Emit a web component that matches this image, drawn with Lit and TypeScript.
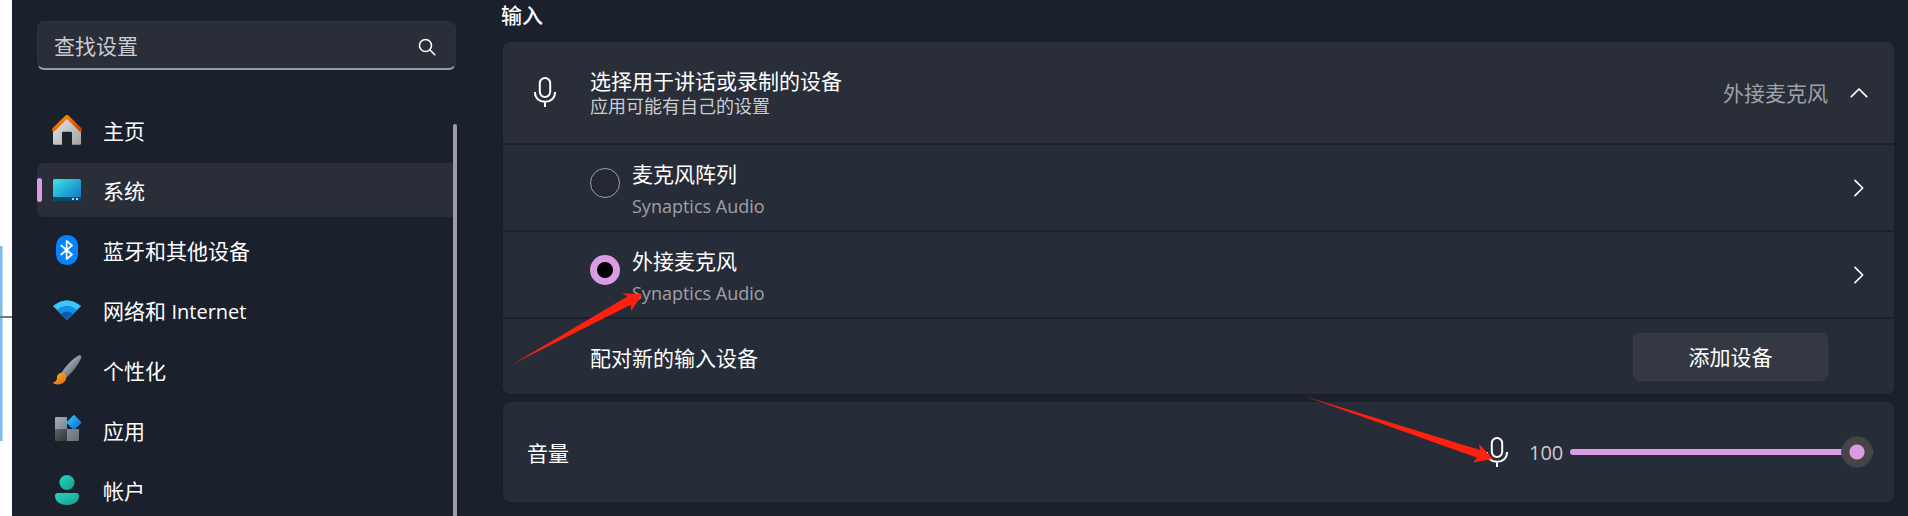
import { LitElement, html, svg, css } from "lit";
import { customElement, state } from "lit/decorators.js";
import { classMap } from "lit/directives/class-map.js";
import { styleMap } from "lit/directives/style-map.js";

const homeIcon = svg`
  <defs>
    <linearGradient id="wall" x1="0" y1="0" x2="1" y2="1"><stop offset="0" stop-color="#e8e8e8"/><stop offset="1" stop-color="#a2a2a2"/></linearGradient>
    <linearGradient id="roof" x1="0" y1="0" x2="1" y2="1"><stop offset="0" stop-color="#fb9a05"/><stop offset="1" stop-color="#d83b01"/></linearGradient>
  </defs>
  <path fill="url(#wall)" d="M1 14 15 2.500 29 14v14.500a1.200 1.200 0 0 1-1.200 1.200H20V18a1.200 1.200 0 0 0-1.200-1.200h-7.600A1.200 1.200 0 0 0 10 18v11.700H2.200A1.200 1.200 0 0 1 1 28.500z"/>
  <path fill="none" stroke="url(#roof)" stroke-width="3.600" stroke-linecap="round" stroke-linejoin="round" d="M1.800 14.500 14 2.500Q15 1.500 16 2.500L28.200 14.500"/>`;

const systemIcon = svg`
  <defs><linearGradient id="scr" x1="0" y1="0" x2="1" y2="1"><stop offset="0" stop-color="#40e4e8"/><stop offset="1" stop-color="#0a6fc4"/></linearGradient></defs>
  <rect x="1" y="4" width="28" height="22" rx="1.500" fill="url(#scr)"/>
  <path fill="#0c4a6c" d="M1 22h28v2.500a1.500 1.500 0 0 1-1.500 1.500h-25A1.500 1.500 0 0 1 1 24.500z"/>
  <path fill="#b9d3e4" d="M20 23h2v2h-2zM24 23h2v2h-2z"/>`;

const bluetoothIcon = svg`
  <rect x="4" y="0" width="22" height="30" rx="10.500" fill="#0682fb"/>
  <path fill="none" stroke="#fff" stroke-width="1.700" stroke-linejoin="round" stroke-linecap="round" d="M9.200 10.500 20 19.500 14.600 24V6L20 10.500 9.200 19.500"/>`;

const networkIcon = svg`
  <path fill="#3bc8f8" stroke="#3bc8f8" stroke-linejoin="round" d="M1.500 11Q15 .500 28.500 11L15 24.500z"/>
  <path fill="#1590e0" d="M5 14.800Q15 6.500 25 14.800L15 25.200z"/>
  <path fill="#0c5cab" d="M9 18.800Q15 14 21 18.800L15 25.200z"/>`;

const brushIcon = svg`
  <defs>
    <linearGradient id="handle" x1="0" y1="0" x2="1" y2="1"><stop offset=".3" stop-color="#b0b5bb"/><stop offset=".75" stop-color="#5d646b"/></linearGradient>
    <linearGradient id="tip" x1="0" y1="0" x2="1" y2="1"><stop offset="0" stop-color="#ffc02e"/><stop offset="1" stop-color="#e8590c"/></linearGradient>
  </defs>
  <path fill="url(#handle)" d="M9 18.500Q17 6 26.500.500q2-.6 2.700.8.4 1-.4 2.600Q24 14 14.500 22.500z"/>
  <path fill="url(#tip)" d="M5 22.500c0-3.500 4-5.500 7-4.300 3 1.400 3.200 5.800.5 8.600C9.500 30 3.500 30.300.5 27.500c2.500 0 4.500-1.500 4.500-5z"/>`;

const appsIcon = svg`
  <defs>
    <linearGradient id="t1" x1="0" y1="0" x2="1" y2="1"><stop offset="0" stop-color="#a5adb6"/><stop offset="1" stop-color="#7d858f"/></linearGradient>
    <linearGradient id="t2" x1="0" y1="0" x2="1" y2="1"><stop offset="0" stop-color="#606669"/><stop offset="1" stop-color="#2f3336"/></linearGradient>
    <linearGradient id="t3" x1="0" y1="0" x2="1" y2="1"><stop offset="0" stop-color="#888e98"/><stop offset="1" stop-color="#686d75"/></linearGradient>
    <linearGradient id="dia" x1="0" y1="0" x2="1" y2="1"><stop offset=".2" stop-color="#2fb8f6"/><stop offset=".9" stop-color="#0b6bd0"/></linearGradient>
  </defs>
  <path fill="url(#t1)" d="M4 2h11v12H3V3a1 1 0 0 1 1-1z"/>
  <path fill="url(#t2)" d="M3 14h12v12H4a1 1 0 0 1-1-1z"/>
  <path fill="url(#t3)" d="M15 14h12v11a1 1 0 0 1-1 1H15z"/>
  <path fill="url(#dia)" d="M21.200.4q.8-.8 1.600 0l6.300 6.300q.8.8 0 1.600l-6.300 6.300q-.8.8-1.600 0l-6.300-6.300q-.8-.8 0-1.600z"/>`;

const accountIcon = svg`
  <defs><linearGradient id="acc" x1="0" y1="0" x2="1" y2="1"><stop offset="0" stop-color="#25d6c0"/><stop offset="1" stop-color="#139c8c"/></linearGradient></defs>
  <circle cx="15" cy="7.500" r="7.600" fill="url(#acc)"/>
  <path fill="url(#acc)" d="M6 18h18a3 3 0 0 1 3 3c0 6-6 9-12 9S3 27 3 21a3 3 0 0 1 3-3z"/>`;

const micIcon = html`<svg class="mic" viewBox="0 0 24 32" width="24" height="32" aria-hidden="true">
  <g fill="none" stroke="#fff" stroke-width="2" stroke-linecap="butt">
    <rect x="6.800" y="2" width="10.400" height="19" rx="5.200"/>
    <path d="M2 16v.5c0 5.500 4.200 9.200 10 9.200s10-3.700 10-9.200V16M12 26v5"/>
  </g>
</svg>`;

const chevron = (d: string) => html`<svg viewBox="0 0 18 18" width="18" height="18" aria-hidden="true">
  <path d=${d} fill="none" stroke="#fff" stroke-width="1.700" stroke-linecap="round" stroke-linejoin="round"/>
</svg>`;
const UP = "M1.300 12.700 9 5l7.700 7.700";
const RIGHT = "M5 1.300 12.700 9 5 16.700";

const navItems = [
  { id: "home", label: "主页", icon: homeIcon },
  { id: "system", label: "系统", icon: systemIcon },
  { id: "bluetooth", label: "蓝牙和其他设备", icon: bluetoothIcon },
  { id: "network", label: html`网络和 <span class="latin">Internet</span>`, icon: networkIcon },
  { id: "personal", label: "个性化", icon: brushIcon },
  { id: "apps", label: "应用", icon: appsIcon },
  { id: "accounts", label: "帐户", icon: accountIcon },
];

const devices = [
  { id: "array", name: "麦克风阵列", vendor: "Synaptics Audio" },
  { id: "external", name: "外接麦克风", vendor: "Synaptics Audio" },
];

const base = css`
  * { box-sizing: border-box; }
  button, input { font: inherit; color: inherit; margin: 0; }
  button { border: 0; background: none; padding: 0; text-align: left; }
  svg { display: block; flex: none; }
  .label { padding-top: 2px; }
`;

@customElement("settings-nav")
class SettingsNav extends LitElement {
  @state() current = "system";

  static styles = [base, css`
    :host { display: flex; flex-direction: column; padding: 21px 0 0 25px; min-height: 0; }
    .search {
      display: flex; align-items: center; height: 49px; margin-right: 1px; padding: 0 19px 0 16px; flex: none;
      background: #292e39; border: 1px solid #2d323d; border-bottom: 2px solid #9a9ca2; border-radius: 7px;
    }
    .field { flex: 1; min-width: 0; border: 0; outline: 0; background: none; padding: 2px 0 0; line-height: 30px; }
    .field::placeholder { color: #cbccd0; opacity: 1; }
    .glass { margin-top: 4px; }
    .body { display: flex; margin-top: 33px; flex: 1; min-height: 0; }
    .list { flex: 1; list-style: none; margin: 0; padding: 0; display: flex; flex-direction: column; gap: 6px; overflow: hidden; }
    .link {
      display: flex; align-items: center; gap: 21px; height: 54px; padding-left: 15px;
      color: #fff; text-decoration: none; border-radius: 7px; position: relative;
    }
    .latin { font-size: 20px; }
    .active { background: #292e39; }
    .active::before { content: ""; position: absolute; left: 0; top: 15px; width: 5px; height: 24px; border-radius: 3px; background: #dc9ce4; }
    .thumb { width: 4px; margin: 21px 0 0 -4px; border-radius: 2px 2px 0 0; background: #9a9ca2; position: relative; }
  `];

  render() {
    return html`
      <label class="search">
        <input class="field" type="text" placeholder="查找设置" aria-label="查找设置">
        <svg class="glass" viewBox="0 0 18 18" width="18" height="18" aria-hidden="true">
          <g fill="none" stroke="#fff" stroke-width="1.600" stroke-linecap="round"><circle cx="7.500" cy="7.500" r="6"/><path d="m12 12 4.800 4.800"/></g>
        </svg>
      </label>
      <nav class="body">
        <ul class="list">
          ${navItems.map((n) => html`<li>
            <a href="#${n.id}" class=${classMap({ link: true, active: n.id === this.current })} @click=${() => (this.current = n.id)}>
              <svg viewBox="0 0 30 30" width="30" height="30" aria-hidden="true" overflow="visible">${n.icon}</svg>
              <span class="label">${n.label}</span>
            </a>
          </li>`)}
        </ul>
        <div class="thumb"></div>
      </nav>`;
  }
}

@customElement("sound-input")
class SoundInput extends LitElement {
  @state() selected = "external";
  @state() volume = 100;

  static styles = [base, css`
    :host { display: block; padding: 0 14px 0 44px; }
    .heading { margin: 0 0 12px; font-size: 21px; line-height: 30px; font-weight: 500; }
    .card { margin: 0 0 8px 2px; border-radius: 7px; box-shadow: 0 0 0 1px #19202b; background: #272c39; }
    .row { display: flex; align-items: center; width: 100%; padding: 0 26px 0 30px; position: relative; }
    .row + .row { border-top: 2px solid #1a202c; }
    .head { height: 101px; background: #292e39; border-radius: 7px 7px 0 0; }
    .icon { width: 57px; padding-bottom: 2px; }
    .text { flex: 1; display: flex; flex-direction: column; }
    .title { line-height: 27px; }
    .sub { font-size: 18px; line-height: 22px; color: #cbccd0; }
    .value { color: #9fa1a7; margin-right: 22px; }
    .device { height: 87px; padding-left: 87px; }
    .pick { flex: 1; display: flex; align-items: center; gap: 12px; }
    .radio {
      appearance: none; width: 30px; height: 30px; border: 1px solid #9fa1a7; border-radius: 50%;
      background: #232833; margin-bottom: 10px; flex: none;
    }
    .radio:checked { border: 7px solid #dc9ce4; background: #000; }
    .names { display: flex; flex-direction: column; gap: 6px; padding-top: 4px; }
    .vendor { font-size: 18px; line-height: 24px; color: #9fa1a7; }
    .pair { height: 77px; padding: 0 66px 0 87px; justify-content: space-between; }
    .add { width: 195px; height: 48px; text-align: center; background: #333843; border: 1px solid #393e49; border-radius: 7px; }
    .volume { height: 100px; padding: 0 21px 0 24px; }
    .level { display: flex; align-items: center; }
    .mute { position: relative; margin-right: 20px; }
    .amount { width: 41px; color: #cbccd0; font-size: 20px; padding-top: 2px; }
    .slider { appearance: none; width: 303px; height: 32px; background: none; }
    .slider::-webkit-slider-runnable-track {
      height: 6px; border-radius: 3px;
      background: linear-gradient(to right, #dc9ce4 var(--fill), #9a9ca2 var(--fill));
    }
    .slider::-webkit-slider-thumb {
      appearance: none; width: 32px; height: 32px; margin-top: -13px; border-radius: 50%;
      border: 1px solid #3a3f4b; background: radial-gradient(circle, #dc9ce4 7px, #454545 8px);
    }
    .arrow { position: absolute; pointer-events: none; z-index: 1; fill: #ff2010; }
    .to-device { left: 10px; top: 61px; }
    .to-mic { right: 15px; bottom: 4px; }
  `];

  render() {
    const chosen = devices.find((d) => d.id === this.selected)!;
    return html`
      <h2 class="heading">输入</h2>
      <section class="card">
        <button class="row head" aria-expanded="true">
          <span class="icon">${micIcon}</span>
          <span class="text">
            <span class="title">选择用于讲话或录制的设备</span>
            <span class="sub">应用可能有自己的设置</span>
          </span>
          <span class="value">${chosen.name}</span>
          ${chevron(UP)}
        </button>
        ${devices.map((d) => html`<div class="row device">
          <label class="pick">
            <input class="radio" type="radio" name="device" .checked=${d.id === this.selected} @change=${() => (this.selected = d.id)}>
            <span class="names"><span class="title">${d.name}</span><span class="vendor">${d.vendor}</span></span>
          </label>
          <button aria-label=${d.name}>${chevron(RIGHT)}</button>
          ${d.id === "external" ? html`<svg class="arrow to-device" viewBox="0 0 130 72" width="130" height="72" aria-hidden="true">
            <path d="M0 71 114.700 3.300 108.700.300 129.300 1 118.300 18l-.6-6.300z"/></svg>` : ""}
        </div>`)}
        <div class="row pair">
          <span class="label">配对新的输入设备</span>
          <button class="add">添加设备</button>
        </div>
      </section>
      <section class="card">
        <div class="row volume">
          <label class="text label" for="volume">音量</label>
          <div class="level">
            <button class="mute" aria-label="静音">
              ${micIcon}
              <svg class="arrow to-mic" viewBox="0 0 190 68" width="190" height="68" aria-hidden="true">
                <path d="M0 0 176 54l-1-6.300L189 63l-20.300 3.400 4.600-4.700z"/></svg>
            </button>
            <output class="amount" for="volume">${this.volume}</output>
            <input class="slider" id="volume" type="range" min="0" max="100" .value=${String(this.volume)}
              style=${styleMap({ "--fill": `${this.volume}%` })}
              @input=${(e: Event) => (this.volume = Number((e.target as HTMLInputElement).value))}>
          </div>
        </div>
      </section>`;
  }
}

@customElement("app-root")
class AppRoot extends LitElement {
  static styles = [base, css`
    :host {
      display: grid; grid-template-columns: 12px 445px minmax(0, 1fr); height: 100vh; overflow: hidden;
      background: #1a212d; color: #fff; font: 21px/30px "Open Sans", "Noto Sans CJK SC", sans-serif;
    }
    .edge { background: #fff; position: relative; }
    .bar { position: absolute; left: 0; top: 246px; width: 3px; height: 195px; background: #7dbce8; border-right: 1px solid #b5daf3; }
    .line { position: absolute; left: 0; right: 0; top: 316px; height: 2px; background: #777; }
  `];

  render() {
    return html`
      <div class="edge"><div class="bar"></div><div class="line"></div></div>
      <settings-nav></settings-nav>
      <sound-input></sound-input>`;
  }
}
